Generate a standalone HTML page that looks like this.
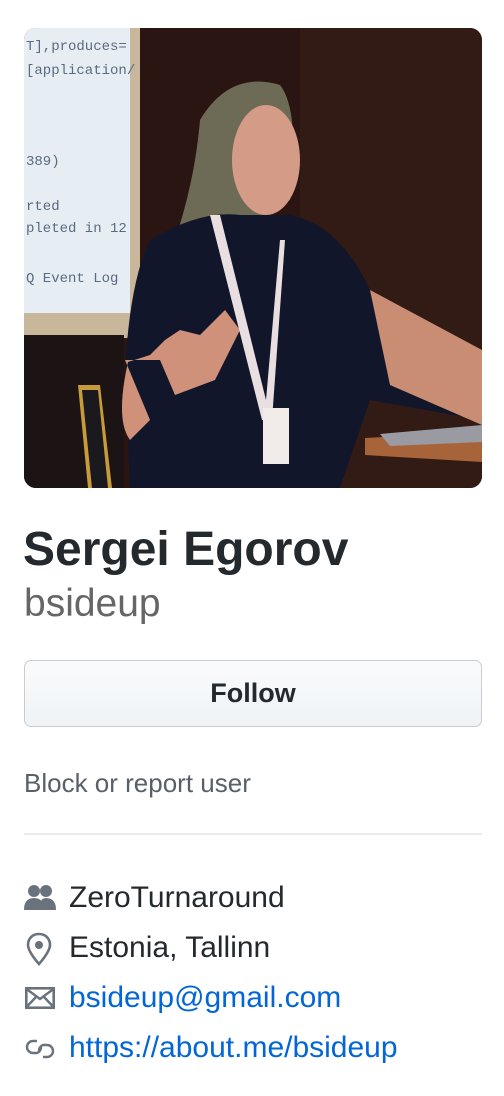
<!DOCTYPE html>
<html><head><meta charset="utf-8"><style>
html,body{margin:0;padding:0;background:#fff;width:504px;height:1096px;overflow:hidden;font-family:"Liberation Sans",Arial,sans-serif;}
.photo{position:absolute;left:24px;top:28px;width:458px;height:460px;border-radius:12px;overflow:hidden;}
.abs{position:absolute;white-space:nowrap;}
.name{left:23px;top:520px;font-size:48px;font-weight:bold;color:#24292e;line-height:60px;}
.user{left:24px;top:581px;font-size:39px;color:#666;line-height:46px;}
.btn{position:absolute;left:24px;top:660px;width:458px;height:67px;border:1px solid #c9ccd0;border-radius:7px;background:linear-gradient(#fafbfc,#eff3f6);box-sizing:border-box;text-align:center;line-height:65px;font-size:27px;font-weight:bold;color:#24292e;}
.block{left:24px;top:768px;font-size:26px;color:#586069;line-height:30px;}
.hr{position:absolute;left:24px;top:833px;width:458px;height:2px;background:#e8eaec;}
.item{left:69px;font-size:30px;line-height:34px;color:#24292e;}
.link{color:#0366d6;}
svg.ic{position:absolute;}
</style></head><body>
<div class="photo">
<svg width="458" height="460" viewBox="24 28 458 460">
<rect x="24" y="28" width="458" height="460" fill="#2b1512"/>
<rect x="300" y="28" width="182" height="460" fill="#321a15"/>
<rect x="24" y="28" width="116" height="310" fill="#c9b79c"/>
<rect x="24" y="28" width="106" height="285" fill="#e6eef3"/>
<g font-family="Liberation Mono,monospace" font-size="14" fill="#5a6a80">
<text x="26" y="50">T],produces=</text><text x="26" y="74">[application/</text>
<text x="26" y="165">389)</text><text x="26" y="210">rted</text><text x="26" y="232">pleted in 12</text>
<text x="26" y="282">Q Event Log</text></g>
<rect x="24" y="335" width="100" height="153" fill="#1c1414"/>
<path d="M78 385 L100 385 L112 488 L88 488Z" fill="#c79a3a"/>
<path d="M82 390 L98 390 L108 488 L92 488Z" fill="#1a1a1e"/>
<path d="M200 120 Q230 70 280 85 Q300 110 290 200 L230 240 L175 240 Q195 180 200 120Z" fill="#6d6a55"/>
<ellipse cx="266" cy="160" rx="34" ry="55" fill="#d49c86"/>
<path d="M150 240 Q200 210 240 215 L290 215 Q340 225 370 290 L482 360 L482 420 L370 400 L340 488 L130 488 L125 370 Q130 280 150 240Z" fill="#12162a"/>
<path d="M370 290 L482 350 L482 425 L390 385Z" fill="#c88d72"/>
<path d="M125 360 L160 360 L175 395 L215 380 L240 330 L225 310 L200 335 L180 330 L165 340 L150 355 L128 362 Q115 420 130 440 L150 420Z" fill="#cf9179"/>
<path d="M210 215 L262 420 L272 420 L285 240 L280 240 L266 400 L220 215Z" fill="#e9dfe0"/>
<rect x="263" y="408" width="26" height="56" fill="#f1ecea"/>
<path d="M365 438 L482 432 L482 462 L365 455Z" fill="#a7643a"/>
<path d="M380 434 L482 425 L482 442 L390 446Z" fill="#9a9aa2"/>
</svg>
</div>
<div class="abs name">Sergei Egorov</div>
<div class="abs user">bsideup</div>
<div class="btn">Follow</div>
<div class="abs block">Block or report user</div>
<div class="hr"></div>

<svg class="ic" style="left:24px;top:884px" width="32" height="28" viewBox="0 0 32 28"><g fill="#6a737d">
<circle cx="10" cy="7" r="6"/><path d="M0 26 Q0 14 10 14 Q20 14 20 26Z"/>
<circle cx="22" cy="7" r="6"/><path d="M15 26 Q15 14 22 14 Q32 14 32 26Z"/></g></svg>
<div class="abs item" style="top:881px">ZeroTurnaround</div>

<svg class="ic" style="left:26px;top:932px" width="26" height="34" viewBox="0 0 26 34"><path d="M13 2 C6 2 2 7 2 13 C2 20 13 32 13 32 C13 32 24 20 24 13 C24 7 20 2 13 2Z" fill="none" stroke="#6a737d" stroke-width="2.6"/><circle cx="13" cy="13" r="4" fill="#6a737d"/></svg>
<div class="abs item" style="top:931px">Estonia, Tallinn</div>

<svg class="ic" style="left:25px;top:987px" width="30" height="22" viewBox="0 0 30 22"><rect x="1.3" y="1.3" width="27.4" height="19.4" fill="none" stroke="#6a737d" stroke-width="2.6"/><path d="M1.5 2 L15 12 L28.5 2 M1.5 20 L11 10 M28.5 20 L19 10" fill="none" stroke="#6a737d" stroke-width="2.4"/></svg>
<div class="abs item link" style="top:981px">bsideup@gmail.com</div>

<svg class="ic" style="left:25px;top:1037px" width="30" height="24" viewBox="0 0 30 24"><path d="M12 4 H8 A6 6 0 0 0 8 16 H12 A6 6 0 0 0 16 10 M18 20 H22 A6 6 0 0 0 22 8 H18 A6 6 0 0 0 14 14" fill="none" stroke="#6a737d" stroke-width="2.4"/></svg>
<div class="abs item link" style="top:1031px">https://about.me/bsideup</div>
</body></html>
